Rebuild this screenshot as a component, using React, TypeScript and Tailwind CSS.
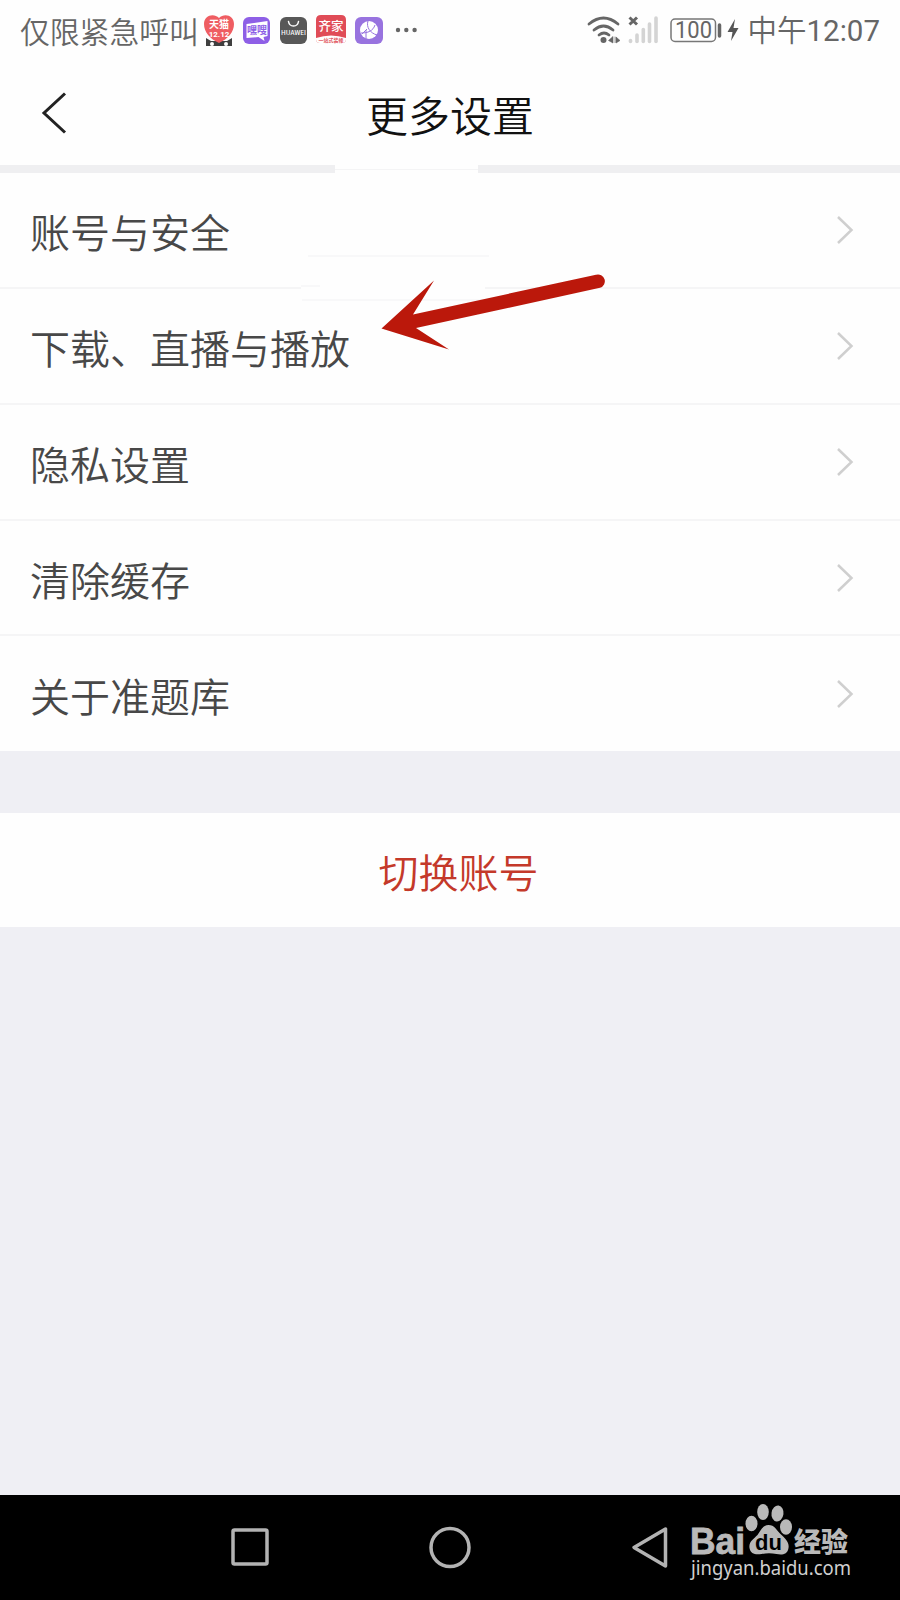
import { clsx } from "clsx";

const ROWS = [
  { label: "账号与安全", height: "h-[116px]" },
  { label: "下载、直播与播放", height: "h-[116px]" },
  { label: "隐私设置", height: "h-[116px]" },
  { label: "清除缓存", height: "h-[115px]" },
  { label: "关于准题库", height: "h-[115px]" },
];

function StatusIcons() {
  return (
    <svg width="224" height="44" viewBox="200 8 224 44" className="shrink-0">
      {/* Tmall heart */}
      <path d="M206 46v-8l5 3h16l5-3v8z" fill="#3f3f3f" />
      <path d="M219 43C210 39 204 32 204 24c0-9 10-11 15-6 5-5 15-3 15 6 0 8-6 15-15 19z" fill="#ef5d62" />
      <circle cx="212" cy="44" r="2" fill="#fff" />
      <circle cx="226" cy="44" r="2" fill="#fff" />
      <text x="219" y="28" textAnchor="middle" fontSize="10" fontWeight="700" fill="#fff">天猫</text>
      <text x="219" y="37" textAnchor="middle" fontFamily="Roboto" fontSize="8" fontWeight="700" fill="#fff">12.12</text>
      {/* Purple chat */}
      <rect x="243" y="17" width="27" height="27" rx="6" fill="#8e5fe6" />
      <path d="M246.500 24l21-3v15l-4 1 1 4-6-4-12 1z" fill="#fff" />
      <text x="257" y="34" textAnchor="middle" fontSize="10" fontWeight="700" fill="#8e5fe6">嘿嗖</text>
      {/* Huawei */}
      <rect x="280" y="17" width="27" height="27" rx="6" fill="#585858" />
      <path d="M288.500 21.500c1 6 9 6 10 0" fill="none" stroke="#fff" strokeWidth="1.500" strokeLinecap="round" />
      <text x="293.500" y="35" textAnchor="middle" fontSize="6" fontWeight="500" fill="#fff" textLength="25" lengthAdjust="spacingAndGlyphs">HUAWEI</text>
      {/* Qijia */}
      <path d="M316 20q0-5 5-5h20q5 0 5 5v19q0 4-4 4h-22q-4 0-4-4z" fill="#e04c57" />
      <path d="M316 38q15-5 30 0v1q0 4-4 4h-22q-4 0-4-4z" fill="#fff" />
      <text x="331" y="31" textAnchor="middle" fontSize="12.500" fontWeight="500" fill="#fff">齐家</text>
      <text x="331" y="42" textAnchor="middle" fontSize="5" fontWeight="700" fill="#e04c57">一站式装修</text>
      {/* Purple globe */}
      <rect x="355" y="17" width="28" height="27" rx="6" fill="#9873df" />
      <circle cx="369" cy="30" r="9" fill="#fff" />
      <path d="M368 21c-2 6 2 12 9 14M361 33c7 0 12-2 14-8M366 30v9M367 29l-5 5" fill="none" stroke="#9873df" strokeWidth="1" />
      <g fill="#666">
        <circle cx="398" cy="30" r="2.200" />
        <circle cx="406.300" cy="30" r="2.200" />
        <circle cx="414.600" cy="30" r="2.200" />
      </g>
    </svg>
  );
}

function SignalIcons() {
  return (
    <svg width="156" height="44" viewBox="584 8 156 44" className="shrink-0">
      <g fill="none" stroke="#666" strokeWidth="2.800" strokeLinecap="round">
        <path d="M589 24q14.500-12 29 0" />
        <path d="M594 30q9.500-8 19 0" />
        <path d="M599 35q5-4 10 0" />
      </g>
      <circle cx="603.500" cy="40" r="3" fill="#666" />
      <path d="M613 36.500v6.500l-4.500-2.500zM615 36.500v6.500M616 43v-6l4 3.500z" fill="#666" stroke="#666" strokeWidth=".6" />
      <path d="M629.500 17.500l7.500 7M637 17.500l-7.500 7" stroke="#666" strokeWidth="3" />
      <g stroke="#d4d4d4" strokeWidth="3.600" strokeLinecap="round">
        <path d="M630.500 40.500v1" />
        <path d="M637 35v6.500" />
        <path d="M643.300 29.500v12" />
        <path d="M649.500 24v17.500" />
        <path d="M656 18v23.500" />
      </g>
      <rect x="671" y="19" width="44.500" height="22.500" rx="4" fill="none" stroke="#777" strokeWidth="1.500" />
      <text x="693.500" y="38.300" textAnchor="middle" fontFamily="Roboto" fontWeight="400" fontSize="23" fill="#666" textLength="37" lengthAdjust="spacingAndGlyphs">100</text>
      <path d="M719.500 25v11" stroke="#666" strokeWidth="3.500" strokeLinecap="round" />
      <path d="M735 19l-7.500 13h5l-1.500 9 7.500-13h-5z" fill="#555" />
    </svg>
  );
}

/* Red pointer with the faint line fragments around it */
function Pointer() {
  return (
    <svg width="330" height="110" viewBox="290 250 330 110" className="absolute left-[290px] top-[250px]">
      <g stroke="#f6f6f7" strokeWidth="1.500">
        <path d="M308 256h181" />
        <path d="M301 286h19" />
        <path d="M302 300h188" />
      </g>
      <path
        d="M381.500 328.500L434 280.500L413 314.500L596 274.700A6.700 6.700 0 0 1 600 287.800L416 328L449 349.500Z"
        fill="#bb180b"
      />
    </svg>
  );
}

function Watermark() {
  return (
    <svg
      width="180"
      height="90"
      viewBox="680 1500 180 90"
      className="absolute left-[680px] top-[1500px]"
      fill="#b9b9b9"
    >
      <text x="690" y="1553.500" fontFamily="Liberation Sans" fontWeight="700" fontSize="36.500" stroke="#b9b9b9" strokeWidth=".8" textLength="55" lengthAdjust="spacingAndGlyphs">Bai</text>
      <ellipse cx="751.500" cy="1523.500" rx="6" ry="7.800" />
      <ellipse cx="763" cy="1512" rx="5.800" ry="8" />
      <ellipse cx="777.500" cy="1513.500" rx="6" ry="8" transform="rotate(8 777.500 1513.500)" />
      <ellipse cx="786" cy="1527" rx="6" ry="7.800" />
      <path d="M768.500 1525c6 0 8 5 12 9 5 5 9 8 8 14-1 7-7 7-12 6-5-1-10-1-15 0-6 1-11 0-12-6-1-6 4-9 8-13 3-4 5-10 11-10z" />
      <text x="768.500" y="1550" textAnchor="middle" fontFamily="Liberation Sans" fontWeight="700" fontSize="22" fill="#000">du</text>
      <text x="794" y="1552" fontFamily="Noto Sans CJK SC" fontWeight="900" fontSize="27">经验</text>
      <text x="691" y="1575" fontFamily="Noto Sans" fontWeight="400" fontSize="19.500" fill="#d0d0d0" textLength="160" lengthAdjust="spacingAndGlyphs">jingyan.baidu.com</text>
    </svg>
  );
}

export default function App() {
  return (
    <div className="relative flex h-[1600px] w-[900px] flex-col overflow-hidden bg-[#efeff4] font-['Noto_Sans_CJK_SC',sans-serif] font-[350] text-[#484848]">
      {/* Status bar */}
      <header className="flex h-[60px] shrink-0 items-center bg-[#fefefe] pl-5 pr-[20px] text-[#666]">
        <span className="w-[180px] shrink-0 whitespace-nowrap text-[29.800px] leading-[60px]">仅限紧急呼叫</span>
        <StatusIcons />
        <div className="ml-auto flex items-center">
          <SignalIcons />
          <span className="ml-2 whitespace-nowrap pt-[3px] font-['Roboto','Noto_Sans_CJK_SC',sans-serif] text-[29.500px] leading-[57px]">
            中午<span className="font-normal">12:07</span>
          </span>
        </div>
      </header>

      {/* Title bar */}
      <div className="grid h-[105px] shrink-0 grid-cols-[100px_1fr_100px] items-center bg-[#fefefe]">
        <svg width="30" height="44" viewBox="0 0 30 44" className="ml-[39px]">
          <path d="M26 2.500L5 22L26 41.500" fill="none" stroke="#222" strokeWidth="3" />
        </svg>
        <h1 className="pt-[2px] text-center text-[42px] leading-[60px] text-[#111]">更多设置</h1>
      </div>
      <div className="flex h-2 shrink-0 items-center bg-[#fefefe]">
        <div className="h-2 w-[335px] bg-[#efeff1]" />
        <div className="h-px w-[143px] bg-[#f4f4f5]" />
        <div className="h-2 flex-1 bg-[#efeff1]" />
      </div>

      <ul className="shrink-0 bg-[#fefefe]">
        {ROWS.map((row, i) => (
          <li key={row.label} className={clsx("flex flex-col", row.height)}>
            <div className="flex flex-1 items-center justify-between pl-[30px] pr-[46px]">
              <span className="pt-[2px] text-[40px] leading-[60px]">{row.label}</span>
              <svg width="18" height="30" viewBox="0 0 18 30">
                <path d="M2 2L15.500 15L2 28" fill="none" stroke="#cfcfcf" strokeWidth="2.500" />
              </svg>
            </div>
            {i < ROWS.length - 1 && (
              <div className="flex h-[2px] justify-between">
                <div className={clsx("bg-[#f5f5f6]", i === 0 ? "w-[301px]" : "w-full")} />
                {i === 0 && <div className="w-[415px] bg-[#f5f5f6]" />}
              </div>
            )}
          </li>
        ))}
      </ul>

      <button className="mt-[62px] h-[114px] shrink-0 bg-[#fefefe] pt-[2px] pl-[17px] text-center text-[40px] leading-[60px] text-[#c4392a]">
        切换账号
      </button>

      {/* Navigation bar */}
      <nav className="mt-auto flex h-[105px] shrink-0 items-center justify-between bg-black pl-[230px] pr-[230px]">
        <svg width="40" height="44" viewBox="0 0 40 44" fill="none" stroke="#b3b3b3" strokeWidth="3.500">
          <rect x="3" y="4" width="34" height="34" rx="1.500" />
        </svg>
        <svg width="44" height="44" viewBox="0 0 44 44" fill="none" stroke="#b3b3b3" strokeWidth="3.500">
          <circle cx="22" cy="21.500" r="19" />
        </svg>
        <svg width="40" height="44" viewBox="0 0 40 44" fill="none" stroke="#b3b3b3" strokeWidth="3.500" strokeLinejoin="round">
          <path d="M4 21.500L35.500 3V40Z" />
        </svg>
      </nav>

      <Pointer />
      <Watermark />
    </div>
  );
}
